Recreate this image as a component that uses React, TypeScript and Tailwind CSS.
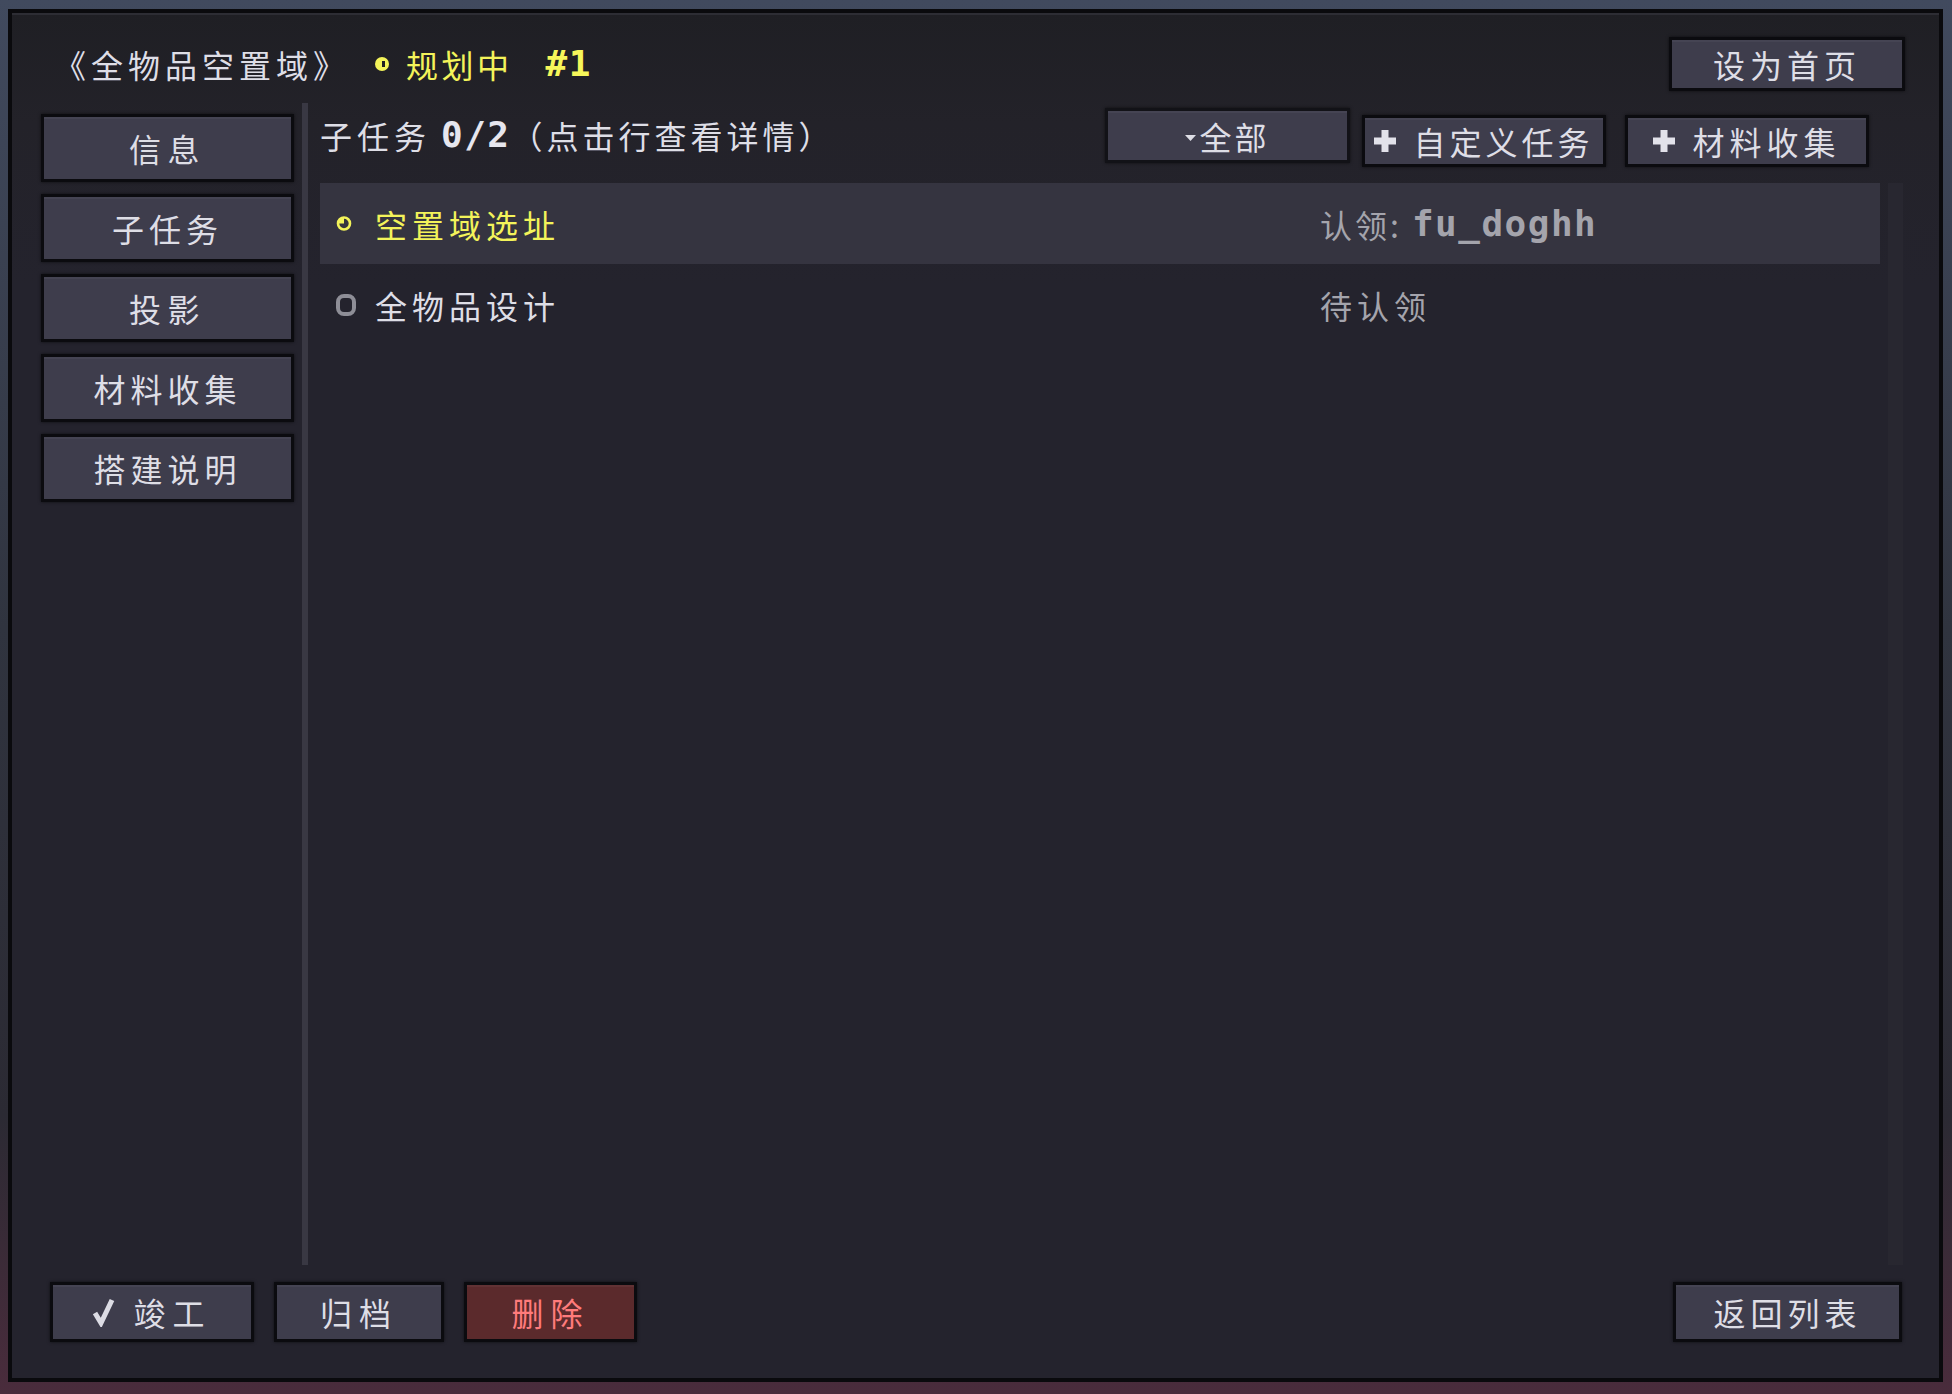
import React from 'react';

type Task = {
  name: string;
  active: boolean;
  owner?: string;
};

const tasks: Task[] = [
  { name: '空置域选址', active: true, owner: 'fu_doghh' },
  { name: '全物品设计', active: false },
];

const tabs = ['信息', '子任务', '投影', '材料收集', '搭建说明'];

const cjk = "font-['Noto_Sans_CJK_SC',sans-serif]";
const mono = "font-['DejaVu_Sans_Mono',monospace] font-bold";

const Button: React.FC<{ className?: string; children: React.ReactNode }> = ({ className = '', children }) => (
  <div
    className={`flex items-center justify-center border-[3px] border-[#0b0b0f] bg-[#3e3d4c] shadow-[inset_0_2px_0_rgba(255,255,255,0.04),0_0_3px_rgba(0,0,0,0.6)] text-[32px] leading-none text-[#dedee6] ${cjk} ${className}`}
  >
    {children}
  </div>
);

const Plus = () => (
  <svg width="22" height="22" viewBox="0 0 22 22" className="shrink-0">
    <rect x="0" y="7.5" width="22" height="7" fill="#e2e2ea" />
    <rect x="7.5" y="0" width="7" height="22" fill="#e2e2ea" />
  </svg>
);

const Check = () => (
  <svg width="24" height="30" viewBox="0 0 24 30" className="shrink-0">
    <polyline points="3,16 9,26 20,3" fill="none" stroke="#dcdce4" strokeWidth="5" strokeLinejoin="miter" />
  </svg>
);

const StatusDot = () => (
  <svg width="14" height="14" viewBox="0 0 14 14">
    <circle cx="7" cy="7" r="7" fill="#f3f35a" />
    <rect x="7" y="4" width="3" height="6" fill="#1f1f24" />
  </svg>
);

const ActiveIcon = () => (
  <svg width="16" height="17" viewBox="0 0 16 17">
    <circle cx="8" cy="8.5" r="6" fill="none" stroke="#f3f35a" strokeWidth="2.6" />
    <path d="M8 8.5 L8 2.5 A6 6 0 0 0 2 8.5 Z" fill="#f3f35a" />
  </svg>
);

const OpenIcon = () => (
  <svg width="20" height="22" viewBox="0 0 20 22">
    <rect x="2" y="2" width="16" height="18" rx="6" fill="none" stroke="#8e8e97" strokeWidth="4" />
  </svg>
);

export default function App() {
  return (
    <div className="w-[1952px] h-[1394px] pl-[8px] pt-[9px] pr-[9px] pb-[12px] bg-[linear-gradient(180deg,#414a5e_0%,#30343f_45%,#2b2a33_80%,#4a2c3c_100%)]">
      <div className="flex h-full flex-col border-[4px] border-[#0a0a0d] bg-[linear-gradient(180deg,#1f1f24_0%,#232229_8%,#24232d_20%,#24232d_100%)] shadow-[inset_0_2px_0_#2d2d34]">
        {/* title bar */}
        <div className="flex h-[90px] shrink-0 items-center pl-[42px] pr-[34px] pt-[12px]">
          <span className={`text-[32px] leading-none tracking-[5px] text-[#dedee6] ${cjk}`}>《全物品空置域》</span>
          <span className="ml-[25px] flex items-center">
            <StatusDot />
          </span>
          <span className={`ml-[17px] text-[32px] leading-none tracking-[3.5px] text-[#f3f35a] ${cjk}`}>规划中</span>
          <span className={`ml-[33px] text-[36px] leading-none tracking-[1.5px] text-[#f6f65a] ${mono}`}>#1</span>
          <div className="flex-1" />
          <Button className="h-[54px] w-[236px] tracking-[5px]">设为首页</Button>
        </div>

        {/* body */}
        <div className="flex min-h-0 flex-1">
          <div className="flex w-[282px] shrink-0 flex-col gap-[12px] pl-[29px] pt-[11px]">
            {tabs.map((t) => (
              <Button key={t} className={`h-[68px] w-[253px] ${t.length === 2 ? 'tracking-[6.5px]' : 'tracking-[5px]'}`}>
                {t}
              </Button>
            ))}
          </div>

          <div className="ml-[8px] w-[6px] shrink-0 bg-[#393843]" />

          <div className="ml-[12px] flex min-w-0 flex-1 flex-col pr-[36px]">
            <div className="flex h-[80px] shrink-0 items-start pr-[34px]">
              <div className="mt-[12px] flex h-[40px] items-center">
                <span className={`text-[32px] leading-none tracking-[5px] text-[#dedee6] ${cjk}`}>子任务</span>
                <span className={`ml-[10px] text-[36px] leading-none tracking-[1.5px] text-[#e6e6ee] ${mono}`}>0/2</span>
                <span className={`text-[32px] leading-none tracking-[4px] text-[#dedee6] ${cjk}`}>（点击行查看详情）</span>
              </div>
              <div className="flex-1" />
              <Button className="mt-[5px] h-[55px] w-[245px] border-[#121217] tracking-[3px]">
                <svg width="11" height="6" viewBox="0 0 11 6" className="mr-[3px] mt-[4px]">
                  <polygon points="0,0 11,0 5.5,6" fill="#dedee6" />
                </svg>
                全部
              </Button>
              <Button className="ml-[12px] mt-[12px] h-[52px] w-[244px] gap-[17px] tracking-[4px]">
                <Plus />
                <span>自定义任务</span>
              </Button>
              <Button className="ml-[19px] mt-[12px] h-[52px] w-[244px] gap-[17px] tracking-[5px]">
                <Plus />
                <span>材料收集</span>
              </Button>
            </div>

            <div className="flex min-h-0 flex-1 gap-[8px]">
              <div className="flex min-w-0 flex-1 flex-col">
                {tasks.map((task) => (
                  <div
                    key={task.name}
                    className={`flex h-[81px] shrink-0 items-center ${task.active ? 'bg-[#353440]' : ''}`}
                  >
                    <div className="flex w-[1000px] shrink-0 items-center">
                      <span className="ml-[16px] flex w-[20px] items-center">
                        {task.active ? <ActiveIcon /> : <OpenIcon />}
                      </span>
                      <span
                        className={`ml-[19px] text-[32px] leading-none tracking-[5px] ${cjk} ${task.active ? 'text-[#f3f35a]' : 'text-[#dedee6]'}`}
                      >
                        {task.name}
                      </span>
                    </div>
                    {task.owner ? (
                      <div className="flex items-center text-[#a4a4ac]">
                        <span className={`text-[32px] leading-none tracking-[3px] ${cjk}`}>认领:</span>
                        <span className={`ml-[10px] text-[36px] leading-none tracking-[1.5px] ${mono}`}>{task.owner}</span>
                      </div>
                    ) : (
                      <span className={`text-[32px] leading-none tracking-[5px] text-[#a4a4ac] ${cjk}`}>待认领</span>
                    )}
                  </div>
                ))}
              </div>
              {/* scroll track */}
              <div className="w-[15px] shrink-0 bg-[#282730]" />
            </div>
          </div>
        </div>

        {/* footer actions */}
        <div className="flex h-[113px] shrink-0 items-start pl-[38px] pr-[37px] pt-[17px]">
          <Button className="h-[60px] w-[204px] gap-[17px] tracking-[7px]">
            <Check />
            <span>竣工</span>
          </Button>
          <Button className="ml-[20px] h-[60px] w-[170px] tracking-[7px]">归档</Button>
          <Button className="ml-[20px] h-[60px] w-[173px] bg-[#5b2a2c] tracking-[7px] text-[#ff7b7b]">删除</Button>
          <div className="flex-1" />
          <Button className="h-[60px] w-[229px] tracking-[5px]">返回列表</Button>
        </div>
      </div>
    </div>
  );
}
